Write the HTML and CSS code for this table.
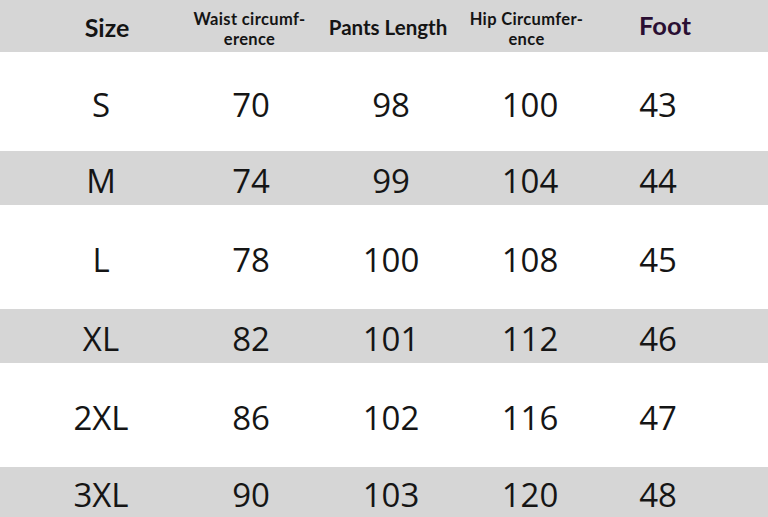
FILE: index.html
```html
<!DOCTYPE html>
<html>
<head>
<meta charset="utf-8">
<link rel="stylesheet" href="styles.css">
</head>
<body>
<div class="table">
  <div class="row head">
    <div class="cell h-size">Size</div>
    <div class="cell h-small h-waist">Waist circumf-<br>erence</div>
    <div class="cell h-pants">Pants Length</div>
    <div class="cell h-small h-hip">Hip Circumfer-<br>ence</div>
    <div class="cell h-foot">Foot</div>
  </div>
  <div class="row data white r-first">
    <div class="cell">S</div><div class="cell">70</div><div class="cell">98</div><div class="cell">100</div><div class="cell">43</div>
  </div>
  <div class="row data gray">
    <div class="cell">M</div><div class="cell">74</div><div class="cell">99</div><div class="cell">104</div><div class="cell">44</div>
  </div>
  <div class="row data white">
    <div class="cell">L</div><div class="cell">78</div><div class="cell">100</div><div class="cell">108</div><div class="cell">45</div>
  </div>
  <div class="row data gray">
    <div class="cell">XL</div><div class="cell">82</div><div class="cell">101</div><div class="cell">112</div><div class="cell">46</div>
  </div>
  <div class="row data white">
    <div class="cell">2XL</div><div class="cell">86</div><div class="cell">102</div><div class="cell">116</div><div class="cell">47</div>
  </div>
  <div class="row data gray r-last">
    <div class="cell">3XL</div><div class="cell">90</div><div class="cell">103</div><div class="cell">120</div><div class="cell">48</div>
  </div>
</div>
</body>
</html>
```
FILE: styles.css
```css
html, body {
  margin: 0;
  padding: 0;
  background: #ffffff;
  width: 768px;
  height: 517px;
  overflow: hidden;
}
.table {
  display: flex;
  flex-direction: column;
  font-family: "Open Sans", "Liberation Sans", sans-serif;
  color: #151515;
}
.row {
  display: grid;
  grid-template-columns: 190px 120px 154px 126px 178px;
  align-items: center;
}
.cell {
  text-align: center;
  font-size: 33px;
  line-height: 40px;
  padding-top: 6px;
}
.data .cell:nth-child(1) { padding-left: 12px; }
.data .cell:nth-child(2) { padding-left: 2px; }
.data .cell:nth-child(3) { padding-left: 8px; }
.data .cell:nth-child(4) { padding-left: 6px; }
.data .cell:nth-child(5) { padding-right: 42px; }

.white { height: 104px; background: #ffffff; }
.r-first { height: 99px; }
.gray { height: 54px; background: #d6d6d6; }
.r-last { height: 50px; }
.r-last .cell { padding-top: 0; line-height: 36px; margin-top: 6px; }

.head {
  height: 52px;
  background: #d6d6d6;
  font-family: Lato, "Open Sans", sans-serif;
  font-weight: 700;
  color: #141414;
}
.head .cell {
  padding-top: 0;
  line-height: 1;
  white-space: nowrap;
}
.h-size { font-size: 25px; padding-left: 24px; margin-top: 2px; }
.h-small {
  font-size: 16.5px;
  letter-spacing: 0.35px;
  line-height: 20px !important;
  margin-top: 6px;
}
.h-waist { padding-right: 1px; }
.h-pants { font-size: 20.5px; padding-left: 2px; margin-top: 2px; }
.h-hip { padding-right: 1px; }
.h-foot { font-size: 25.5px; color: #2a0f33; padding-right: 28px; }
```
